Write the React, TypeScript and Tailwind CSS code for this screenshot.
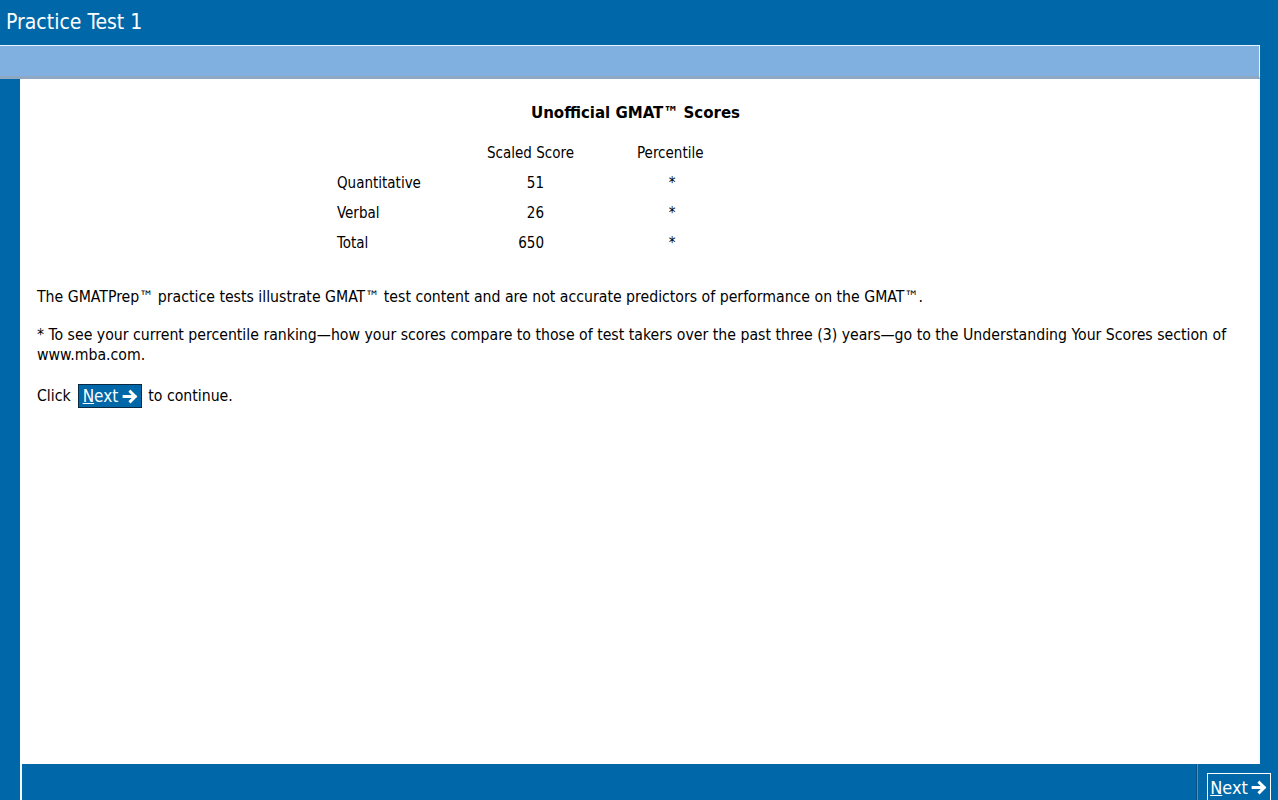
import React from "react";

const Arrow = ({ className = "" }: { className?: string }) => (
  <svg viewBox="0 0 16 16" className={className} fill="none" stroke="currentColor" strokeWidth={2.8} strokeLinecap="square">
    <path d="M2 8h10" />
    <path d="M8 3.5 12.5 8 8 12.5" />
  </svg>
);

export default function App() {
  const font = { fontFamily: '"DejaVu Sans Condensed", "Noto Sans", sans-serif' };
  return (
    <div className="h-[800px] w-[1278px] bg-[#0068a8] flex flex-col overflow-hidden text-black" style={font}>
      <div className="h-[45px] flex items-center pl-[6px] text-white text-[21px]">Practice Test 1</div>
      <div className="flex-1 flex min-h-0">
        <div className="w-[1260px] flex flex-col">
          <div className="h-[34px] bg-[#7fb0e0] border-t border-r border-[#e8f4ff] border-b-[3px] border-b-[#8ea8c4]" />
          <div className="flex-1 flex">
            <div className="w-[20px]" />
            <div className="flex-1 bg-white border-r-2 border-[#f4faff] pl-[17px] pr-[24px] text-[15.7px] leading-[20px]">
              <div className="text-center font-bold text-[16.7px] mt-[23px]">Unofficial GMAT™ Scores</div>
              <div className="ml-[300px] mt-[16px] text-[15px]">
                <div className="flex h-[30px] items-center">
                  <div className="w-[150px]" />
                  <div className="w-[150px]">Scaled Score</div>
                  <div className="w-[100px]">Percentile</div>
                </div>
                {[
                  ["Quantitative", "51"],
                  ["Verbal", "26"],
                  ["Total", "650"],
                ].map(([a, b]) => (
                  <div key={a} className="flex h-[30px] items-center">
                    <div className="w-[150px]">{a}</div>
                    <div className="w-[57px] text-right">{b}</div>
                    <div className="w-[93px]" />
                    <div className="w-[70px] text-center">*</div>
                  </div>
                ))}
              </div>
              <p className="mt-[29px]">
                The GMATPrep™ practice tests illustrate GMAT™ test content and are not accurate predictors of performance on the GMAT™.
              </p>
              <p className="mt-[18px]">
                * To see your current percentile ranking—how your scores compare to those of test takers over the past three (3) years—go to the Understanding Your Scores section of www.mba.com.
              </p>
              <div className="mt-[19px] flex items-center">
                <span>Click</span>
                <span className="ml-[7px] mr-[6px] inline-flex items-center gap-[4px] bg-[#0068a8] text-white border border-[#0a2a44] pl-[4px] pr-[2px] h-[24px] text-[17px]">
                  <span><span className="underline">N</span>ext</span>
                  <Arrow className="w-[17px] h-[17px]" />
                </span>
                <span>to continue.</span>
              </div>
            </div>
          </div>
        </div>
        <div className="flex-1" />
      </div>
      <div className="h-[36px] flex">
        <div className="w-[20px]" />
        <div className="w-[2px] bg-[#f4faff]" />
        <div className="flex-1 flex justify-end">
          <div className="w-[1px] bg-[#0a4f7e]" />
          <div className="w-[1px] bg-[#4a90c8]" />
          <div className="w-[80px] flex items-end justify-center pl-[2px]">
            <div className="h-[27px] w-[64px] border border-white border-b-0 text-white text-[18px] flex items-center justify-center gap-[3px]">
              <span><span className="underline">N</span>ext</span>
              <Arrow className="w-[17px] h-[17px]" />
            </div>
          </div>
        </div>
      </div>
    </div>
  );
}
